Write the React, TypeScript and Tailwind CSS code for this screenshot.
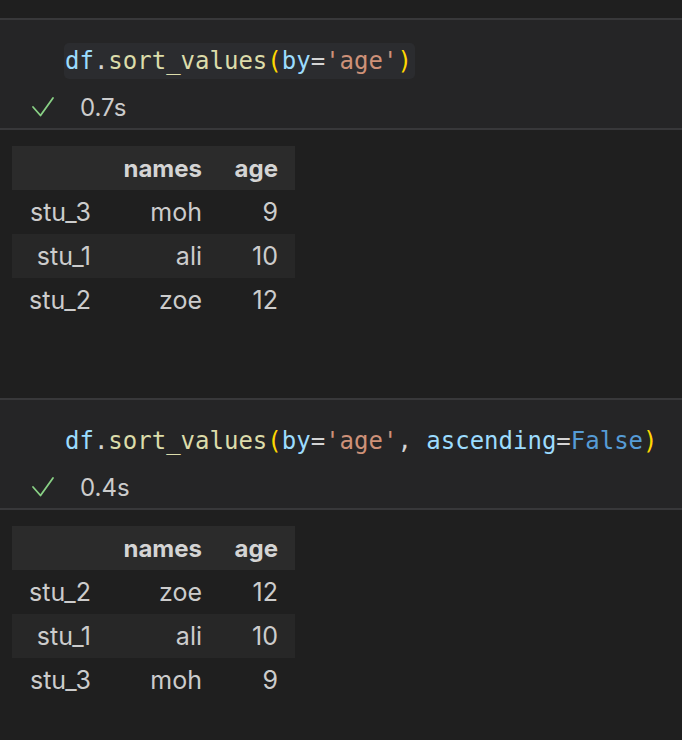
import React from "react";

type Row = [string, string, string];

const mono = { fontFamily: '"DejaVu Sans Mono", Menlo, monospace' };

function Check() {
  return (
    <svg width="24" height="22" viewBox="0 0 24 22" className="block">
      <path d="M2 11 L9.5 19.5 L22 2" fill="none" stroke="#89d185" strokeWidth="1.8" strokeLinecap="round" strokeLinejoin="round" />
    </svg>
  );
}

function Code({ kind }: { kind: 1 | 2 }) {
  return (
    <span className="whitespace-pre">
      <span className="text-[#9cdcfe]">df</span>
      <span className="text-[#d4d4d4]">.</span>
      <span className="text-[#dcdcaa]">sort_values</span>
      <span className="text-[#ffd700]">(</span>
      <span className="text-[#9cdcfe]">by</span>
      <span className="text-[#d4d4d4]">=</span>
      <span className="text-[#ce9178]">'age'</span>
      {kind === 2 && (
        <>
          <span className="text-[#d4d4d4]">, </span>
          <span className="text-[#9cdcfe]">ascending</span>
          <span className="text-[#d4d4d4]">=</span>
          <span className="text-[#569cd6]">False</span>
        </>
      )}
      <span className="text-[#ffd700]">)</span>
    </span>
  );
}

function Cell({ kind, time }: { kind: 1 | 2; time: string }) {
  return (
    <>
      <div className="h-[2px] bg-[#38383a]" />
      <div className="h-[108px] bg-[#252526] flex flex-col pt-[23px]">
        <div className="h-[36px] flex items-center pl-[64px]">
          <div
            className={
              "h-[36px] flex items-center pr-[3px] pl-[1px] rounded-[5px] text-[24px] leading-[36px] " +
              (kind === 1 ? "bg-[#2b2c2f]" : "")
            }
            style={mono}
          >
            <Code kind={kind} />
          </div>
        </div>
        <div className="h-[36px] mt-[10px] flex items-center">
          <div className="w-[31px]" />
          <Check />
          <span className="ml-[25px] text-[24px] text-[#cccccc] font-['Inter',sans-serif] leading-[36px] pt-[1px]">{time}</span>
        </div>
      </div>
      <div className="h-[2px] bg-[#38383a]" />
    </>
  );
}

function Table({ rows }: { rows: Row[] }) {
  return (
    <div className="pt-[16px] pl-[12px] font-['Inter',sans-serif] text-[#cccccc]">
      <div className="flex h-[44px] items-center bg-[#2b2b2b] w-[283px] font-bold text-[24px] text-[#d4d4d4] pt-[1px]">
        <div className="w-[95px]" />
        <div className="w-[112px] text-right pr-[17px]">names</div>
        <div className="w-[76px] text-right pr-[17px]">age</div>
      </div>
      {rows.map((r, i) => (
        <div
          key={i}
          className={"flex h-[44px] items-center w-[283px] text-[25px] pt-[2px] " + (i === 1 ? "bg-[#272727]" : "")}
        >
          <div className="w-[95px] text-right pr-[16px]">{r[0]}</div>
          <div className="w-[112px] text-right pr-[17px]">{r[1]}</div>
          <div className="w-[76px] text-right pr-[17px]">{r[2]}</div>
        </div>
      ))}
    </div>
  );
}

export default function App() {
  return (
    <div className="w-[682px] h-[740px] bg-[#1f1f1f] overflow-hidden">
      <div className="h-[18px]" />
      <Cell kind={1} time="0.7s" />
      <Table
        rows={[
          ["stu_3", "moh", "9"],
          ["stu_1", "ali", "10"],
          ["stu_2", "zoe", "12"],
        ]}
      />
      <div className="h-[76px]" />
      <Cell kind={2} time="0.4s" />
      <Table
        rows={[
          ["stu_2", "zoe", "12"],
          ["stu_1", "ali", "10"],
          ["stu_3", "moh", "9"],
        ]}
      />
    </div>
  );
}
